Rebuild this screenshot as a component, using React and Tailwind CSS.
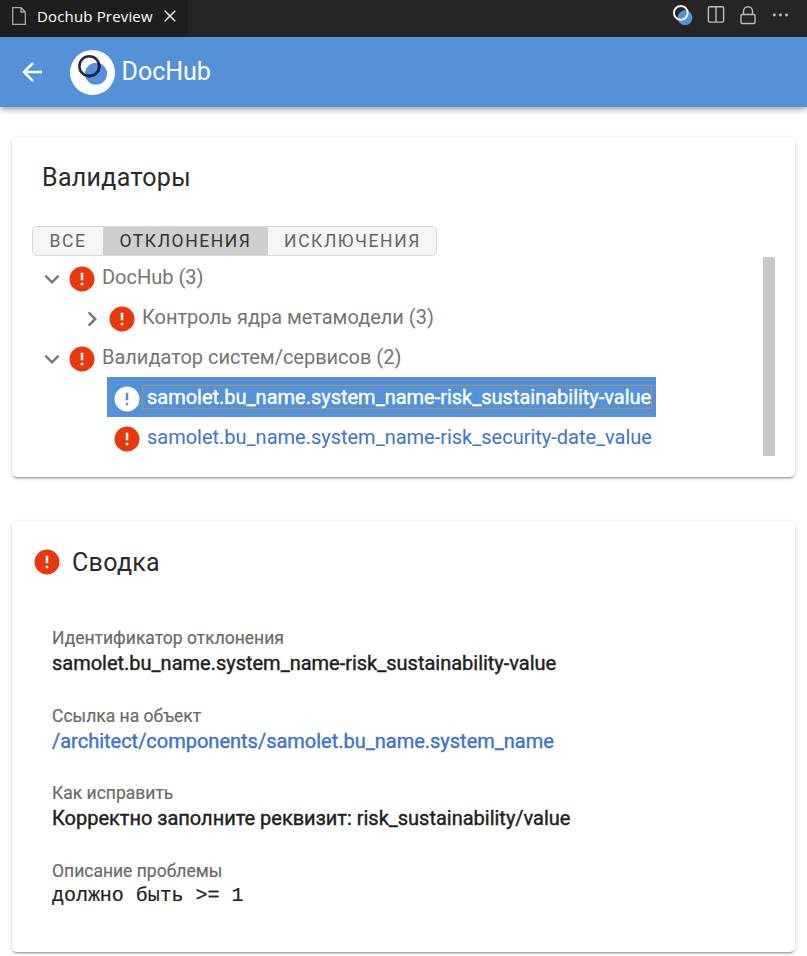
import React from 'react';

function AlertIcon({ className = 'text-[#e8380d]' }) {
  return (
    <svg viewBox="0 0 24 24" className={`size-[30px] shrink-0 fill-current ${className}`}>
      <path d="M13,13H11V7H13M13,17H11V15H13M12,2A10,10 0 0,0 2,12A10,10 0 0,0 12,22A10,10 0 0,0 22,12A10,10 0 0,0 12,2Z" />
    </svg>
  );
}

function Chevron({ open }) {
  return (
    <svg viewBox="0 0 24 24" className="size-[30px] shrink-0 fill-[#7a7a7a]">
      <path
        d={
          open
            ? 'M7.41,8.58L12,13.17L16.59,8.58L18,10L12,16L6,10L7.41,8.58Z'
            : 'M8.59,16.58L13.17,12L8.59,7.41L10,6L16,12L10,18L8.59,16.58Z'
        }
      />
    </svg>
  );
}

function TabBar() {
  return (
    <div className="flex h-[37px] justify-between bg-[#252526]">
      <div className="flex h-full w-[188px] items-center bg-[#1e1e1e] pb-1.5 pl-3">
        <svg viewBox="0 0 14 18" className="h-[18px] w-[14px] fill-none stroke-[#a9a9a9] stroke-[1.3]">
          <path d="M.7.7H9L13.3 5V17.3H.7ZM9 .7V5H13.3" />
        </svg>
        <span className="ml-[11px] w-[116px] font-['Open_Sans','Noto_Sans',sans-serif] text-[15px] leading-[22px] tracking-[0.16px] whitespace-nowrap text-white">
          Dochub Preview
        </span>
        <svg viewBox="0 0 12 12" className="ml-[11px] size-3 fill-none stroke-[#f0f0f0] stroke-[1.5]">
          <path d="M.7.7 11.3 11.3M11.3.7.7 11.3" />
        </svg>
      </div>
      <svg viewBox="0 0 135 30" className="h-[30px] w-[135px] fill-none">
        <circle cx="13" cy="17.7" r="7.4" className="fill-[#5491d9]" />
        <circle cx="8.8" cy="12.8" r="6.9" className="stroke-[#f3f3f3] stroke-2" />
        <g className="stroke-[#bdbdbd] stroke-[1.4]">
          <rect x="36.4" y="6.7" width="15.2" height="15.4" rx="1" />
          <path d="M44 6.7V22" />
          <rect x="69" y="14.5" width="14" height="9" rx="1" />
          <path d="M71.5 14.5V11.2A4.5 4.5 0 0 1 80.5 11.2V14.5" />
        </g>
        <g className="fill-[#c5c5c5]">
          <circle cx="102.3" cy="15" r="1.4" />
          <circle cx="108.4" cy="15" r="1.4" />
          <circle cx="114.5" cy="15" r="1.4" />
        </g>
      </svg>
    </div>
  );
}

function AppBar() {
  return (
    <header className="flex h-[70px] items-center bg-[#5491d9] pl-[17px] shadow-[0_2px_4px_-1px_rgba(0,0,0,0.2),0_4px_5px_0_rgba(0,0,0,0.14),0_1px_10px_0_rgba(0,0,0,0.12)]">
      <svg viewBox="0 0 24 24" className="size-[30px] fill-white">
        <path d="M20,11V13H8L13.5,18.5L12.08,19.92L4.16,12L12.08,4.08L13.5,5.5L8,11H20Z" />
      </svg>
      <svg viewBox="0 0 45 45" className="ml-[23px] size-[45px]">
        <defs>
          <clipPath id="disc">
            <circle cx="26" cy="23.7" r="11" />
          </clipPath>
        </defs>
        <circle cx="22.5" cy="22.5" r="22.5" className="fill-white" />
        <circle cx="26" cy="23.7" r="11" className="fill-[#5491d9]" />
        <circle cx="19.3" cy="16.2" r="9.9" className="fill-none stroke-[#252b45] stroke-[2.6]" />
        <circle cx="19.3" cy="16.2" r="9.9" clipPath="url(#disc)" className="fill-none stroke-[#0d2350] stroke-[2.6]" />
      </svg>
      <span className="ml-[6.5px] text-[25px] leading-[30px] text-white">DocHub</span>
    </header>
  );
}

const cardShadow =
  'rounded-[5px] bg-white shadow-[0_3px_1px_-2px_rgba(0,0,0,0.2),0_2px_2px_0_rgba(0,0,0,0.14),0_1px_5px_0_rgba(0,0,0,0.12)]';

function Filter() {
  return (
    <div className="flex h-[30px] w-[405px] overflow-hidden rounded-[5px] border border-[#dadada] bg-[#f5f5f5] text-[17.5px] leading-[28px] tracking-[1.56px] text-[#666666]">
      <button className="w-[70px]">ВСЕ</button>
      <button className="w-[165px] bg-[#cfcfcf] text-[#333333]">ОТКЛОНЕНИЯ</button>
      <button className="flex-1 pl-px">ИСКЛЮЧЕНИЯ</button>
    </div>
  );
}

function Branch({ open, indent, children }) {
  return (
    <div className={`flex h-10 items-center text-[#757575] ${indent}`}>
      <span className="flex pt-1">
        <Chevron open={open} />
        <AlertIcon />
      </span>
      <span className="ml-[5px] tracking-[-0.01px]">{children}</span>
    </div>
  );
}

function Field({ label, children }) {
  return (
    <div className="h-[77.5px]">
      <div className="text-[17.5px] leading-[25px] text-[#6b6b6b] [-webkit-text-stroke:0.2px]">{label}</div>
      {children}
    </div>
  );
}

export default function App() {
  return (
    <div className="h-[956px] overflow-hidden bg-white font-['Roboto',sans-serif] text-[20px] leading-[30px] text-[#212121]">
      <TabBar />
      <AppBar />
      <main className="flex flex-col gap-11 py-[30px] pr-3 pl-3">
        <section className={`h-[340px] w-[783px] pt-[25px] pl-5 ${cardShadow}`}>
          <h2 className="pl-[10px] text-[25px] leading-[32px] tracking-[0.31px] text-[#2a2a2a]">Валидаторы</h2>
          <div className="mt-8">
            <Filter />
          </div>
          <div className="mt-px flex h-[200px] justify-between pr-5">
            <div>
              <Branch open indent="pl-[5px]">DocHub (3)</Branch>
              <Branch indent="pl-[45px]">Контроль ядра метамодели (3)</Branch>
              <Branch open indent="pl-[5px]">Валидатор систем/сервисов (2)</Branch>
              <div className="ml-[75px] flex h-10 w-[549px] items-center bg-[#5491d9] pl-[5px] text-white">
                <AlertIcon className="mt-[3px] text-white" />
                <span className="flex h-6 w-[510px] items-center border border-[#a8965f] pl-1 tracking-[-0.01px] whitespace-nowrap [-webkit-text-stroke:0.4px]">
                  samolet.bu_name.system_name-risk_sustainability-value
                </span>
              </div>
              <div className="ml-[75px] flex h-10 items-center pl-[5px] text-[#3d74cc]">
                <AlertIcon className="mt-[3px] text-[#e8380d]" />
                <span className="pl-[5px] tracking-[-0.01px] whitespace-nowrap">samolet.bu_name.system_name-risk_security-date_value</span>
              </div>
            </div>
            <div className="h-[199px] w-3 bg-[#c8c8c8]" />
          </div>
        </section>

        <section className={`h-[431px] w-[783px] pt-[25px] ${cardShadow}`}>
          <h2 className="flex h-8 items-start pl-5 text-[25px] leading-[32px] tracking-[0.31px] text-[#2a2a2a]">
            <AlertIcon className="mt-px text-[#e8380d]" />
            <span className="ml-[10px] pt-px">Сводка</span>
          </h2>
          <div className="pt-12 pl-10">
            <Field label="Идентификатор отклонения">
              <div className="leading-[25px] tracking-[-0.01px] [-webkit-text-stroke:0.4px]">samolet.bu_name.system_name-risk_sustainability-value</div>
            </Field>
            <Field label="Ссылка на объект">
              <a className="block leading-[24px] tracking-[-0.01px] text-[#3d74cc] [-webkit-text-stroke:0.4px]">
                /architect/components/samolet.bu_name.system_name
              </a>
            </Field>
            <Field label="Как исправить">
              <div className="leading-[25px] tracking-[-0.01px] [-webkit-text-stroke:0.4px]">
                Корректно заполните реквизит: risk_sustainability/value
              </div>
            </Field>
            <Field label="Описание проблемы">
              <pre className="font-['Liberation_Mono',monospace] leading-[24px] tracking-[-0.04px] [-webkit-text-stroke:0.2px]">{'должно быть >= 1'}</pre>
            </Field>
          </div>
        </section>
      </main>
    </div>
  );
}
